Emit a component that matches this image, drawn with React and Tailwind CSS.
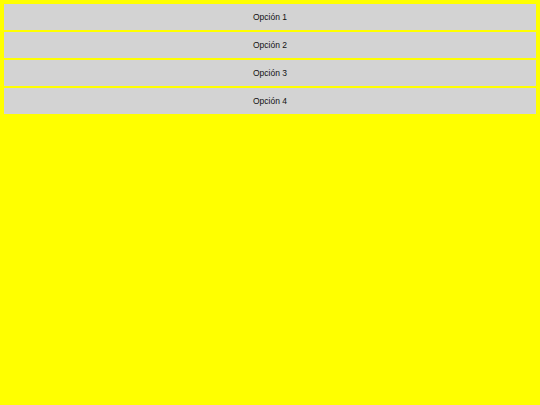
export default function App() {
  const items = ["Opción 1", "Opción 2", "Opción 3", "Opción 4"];
  return (
    <div className="w-[540px] h-[405px] bg-[#ffff00] p-[4px] flex flex-col gap-[2px]" style={{ fontFamily: '"Liberation Sans", Arial, sans-serif' }}>
      {items.map((t) => (
        <div key={t} className="h-[26px] bg-[#d3d3d3] flex items-center justify-center text-[8.5px] text-[#111]">
          {t}
        </div>
      ))}
    </div>
  );
}
